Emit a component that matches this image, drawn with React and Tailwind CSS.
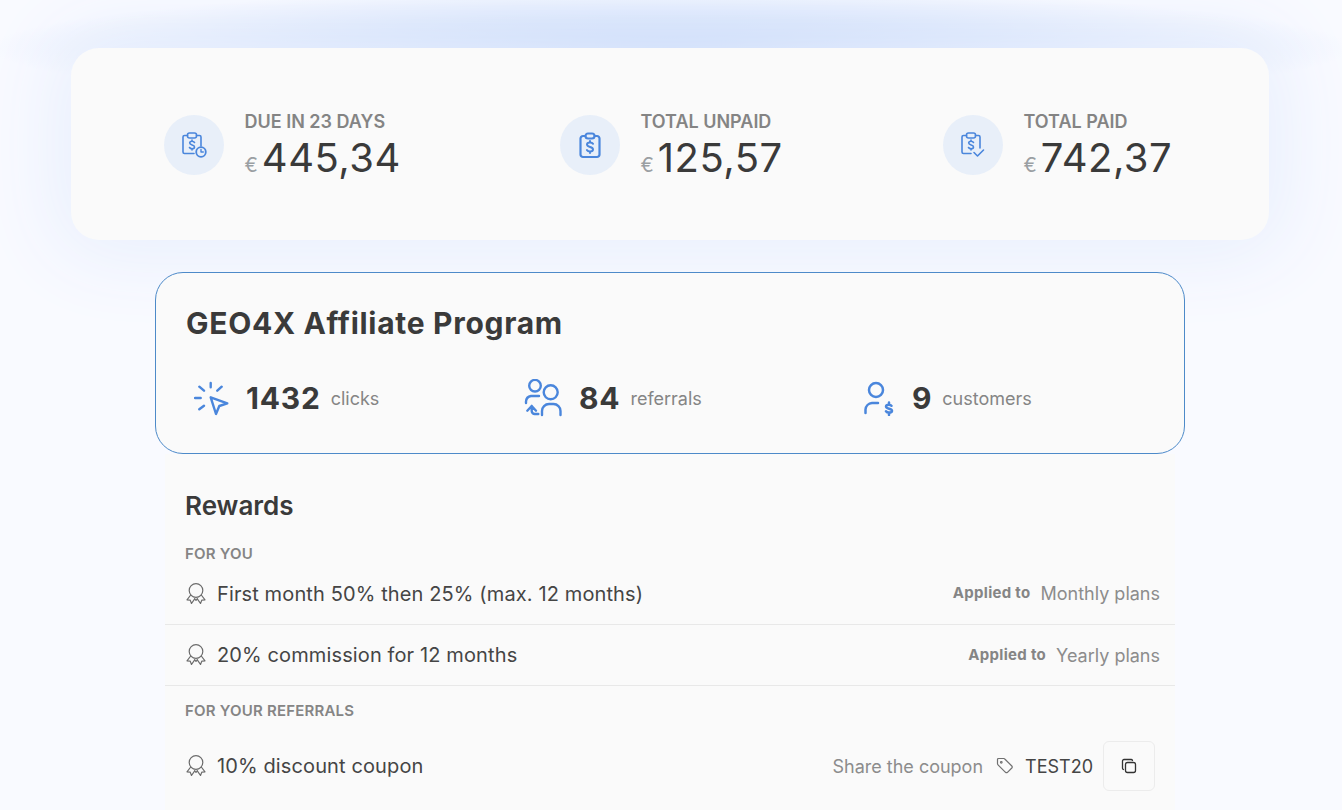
const BLUE = "#4a86dc";

function ClipboardBase({ children }) {
  return (
    <svg width="28" height="28" viewBox="0 0 28 28" fill="none" stroke={BLUE} strokeWidth="1.600" strokeLinecap="round" strokeLinejoin="round">
      {children}
    </svg>
  );
}

// dollar sign with short stubs, shared by the two thin clipboards
const THIN_DOLLAR = "M14.500 11.500c-.5-.8-1.400-1.200-2.500-1.200-1.400 0-2.300.8-2.300 1.800 0 2.500 4.800 1.300 4.800 3.800 0 1-1 1.800-2.500 1.800-1.100 0-2-.4-2.500-1.200M12 9v1.300M12 17.700V19";

function ClipboardClock() {
  return (
    <ClipboardBase>
      <path d="M7.500 4.500H4.500A1.500 1.500 0 0 0 3 6v15a1.500 1.500 0 0 0 1.500 1.500H14" />
      <path d="M16.500 4.500h3A1.500 1.500 0 0 1 21 6v9" />
      <rect x="7.500" y="2" width="9" height="5" rx="2" />
      <path d={THIN_DOLLAR} />
      <circle cx="21" cy="21" r="4.800" strokeWidth="1.800" />
      <path d="M21 18.500V21h2.300" strokeWidth="1.400" />
    </ClipboardBase>
  );
}

function ClipboardDollar() {
  return (
    <ClipboardBase>
      <path d="M9 5H7a2.500 2.500 0 0 0-2.500 2.500v16A2.500 2.500 0 0 0 7 26h14a2.500 2.500 0 0 0 2.500-2.500v-16A2.500 2.500 0 0 0 21 5h-2" strokeWidth="2.200" />
      <rect x="9.500" y="2.500" width="9" height="5" rx="2.500" strokeWidth="2.200" />
      <path d="M17 12.800c-.5-.9-1.500-1.300-3-1.300-1.700 0-3 .8-3 2.100 0 3 6 1.700 6 4.600 0 1.300-1.300 2.200-3 2.200-1.500 0-2.600-.5-3.100-1.400M14 10v1.500M14 20.400V22" strokeWidth="2" />
    </ClipboardBase>
  );
}

function ClipboardCheck() {
  return (
    <ClipboardBase>
      <path d="M7.500 4.500H4.500A1.500 1.500 0 0 0 3 6v15a1.500 1.500 0 0 0 1.500 1.500H12" />
      <path d="M16.500 4.500h3A1.500 1.500 0 0 1 21 6v11" />
      <rect x="7.500" y="2" width="9" height="5" rx="2" />
      <path d={THIN_DOLLAR} />
      <path d="M15 21.500l3.500 3.500 6-6" />
    </ClipboardBase>
  );
}

function ClickIcon() {
  return (
    <svg width="36" height="36" viewBox="0 0 36 36" fill="none" stroke={BLUE} strokeWidth="2.400" strokeLinecap="round" strokeLinejoin="round">
      <path d="M16.700 3v4.300M1 18h5.700M5.300 6.700l4.700 4M27.700 6.700l-4.400 4M5.300 29.300l4.700-3.600" />
      <path d="M16.700 17.300l16.600 6-8 2.700-3.300 8z" />
    </svg>
  );
}

function ReferralIcon() {
  return (
    <svg width="39" height="38" viewBox="0 0 39 38" fill="none" stroke={BLUE} strokeWidth="2.400" strokeLinecap="round" strokeLinejoin="round">
      <circle cx="11" cy="6.700" r="5.800" />
      <circle cx="26.700" cy="13.300" r="7" />
      <path d="M2 24v-1.500a6 6 0 0 1 5-5.500h8" />
      <path d="M18 36v-4a7 7 0 0 1 7-7h4.500a7 7 0 0 1 7 7v4" />
      <path d="M3.300 31.700L7.700 27l4.300 4.700M7.700 27v5a3 3 0 0 0 3 3h3.600" />
    </svg>
  );
}

function CustomerIcon() {
  return (
    <svg width="32" height="36" viewBox="0 0 32 36" fill="none" stroke={BLUE} strokeWidth="2.500" strokeLinecap="round" strokeLinejoin="round">
      <circle cx="12" cy="10" r="7" />
      <path d="M1.500 33v-3.500a7 7 0 0 1 6.500-6.500h6" />
      <path d="M27.500 25.800c-.5-.8-1.300-1.100-2.500-1.100-1.700 0-3 .7-3 1.900 0 2.700 6 1.500 6 4.100 0 1.200-1.300 1.900-3 1.900-1.300 0-2.400-.4-3-1.300M25 22.500v2.200M25 32.600V35" />
    </svg>
  );
}

function AwardIcon() {
  return (
    <svg width="22" height="22" viewBox="0 0 22 22" fill="none" stroke="#6b6b6b" strokeWidth="1.200" strokeLinecap="round" strokeLinejoin="round" className="shrink-0">
      <circle cx="11" cy="7.500" r="6.800" />
      <path d="M5.700 12L2 16.800l3.200.3 1.300 3.400 3.200-4.700" />
      <path d="M16.300 12l3.700 4.800-3.200.3-1.300 3.400-3.200-4.700" />
      <path d="M9.700 15.800l1.300 1.500 1.300-1.500" />
    </svg>
  );
}

function TagIcon() {
  return (
    <svg width="18" height="18" viewBox="0 0 18 18" fill="none" stroke="#707070" strokeWidth="1.200" strokeLinecap="round" strokeLinejoin="round">
      <path d="M1.500 2.500a1 1 0 0 1 1-1h5.300a1.500 1.500 0 0 1 1 .5l7 7a1.500 1.500 0 0 1 0 2l-4.300 4.300a1.500 1.500 0 0 1-2 0l-7.500-7.500a1.500 1.500 0 0 1-.5-1z" />
      <circle cx="5.300" cy="5.300" r=".8" />
    </svg>
  );
}

function CopyIcon() {
  return (
    <svg width="16" height="16" viewBox="0 0 16 16" fill="none" stroke="#333" strokeWidth="1.300" strokeLinecap="round" strokeLinejoin="round">
      <rect x="4.500" y="4.500" width="10" height="10" rx="2" />
      <path d="M11.500 2.500a1.500 1.500 0 0 0-1.500-1H3a1.500 1.500 0 0 0-1.500 1.500v7a1.500 1.500 0 0 0 1 1.500" />
    </svg>
  );
}

function Stat({ icon, label, value }) {
  return (
    <div className="flex items-center gap-[20.500px]">
      <div className="w-[60px] h-[60px] rounded-full bg-[#e8eff9] flex items-center justify-center shrink-0">{icon}</div>
      <div className="pt-[2px]">
        <div className="text-[18px] leading-[22px] font-semibold text-[#848484] tracking-[0px]">{label}</div>
        <div className="flex items-baseline mt-[1px] h-[48px] text-[#3a3a3a]">
          <span className="text-[20px] text-[#9a9fa3] mr-[4px]">€</span>
          <span className="text-[40px] leading-[48px] tracking-[0.5px]">{value}</span>
        </div>
      </div>
    </div>
  );
}

function Metric({ icon, value, label, className = "" }) {
  return (
    <div className={`flex items-center gap-[16px] ${className}`}>
      {icon}
      <div className="flex items-center gap-[10px]">
        <span className="text-[30px] font-bold text-[#3a3a3a] leading-none tracking-[0.8px]">{value}</span>
        <span className="text-[18px] text-[#858585]">{label}</span>
      </div>
    </div>
  );
}

function Row({ text, right, className = "" }) {
  return (
    <div className={`flex items-center justify-between pl-[20px] pr-[15px] ${className}`}>
      <div className="flex items-center gap-[10px] text-[20px] tracking-[0.12px] text-[#454545]">
        <AwardIcon />
        <span>{text}</span>
      </div>
      {right}
    </div>
  );
}

function Applied({ plan }) {
  return (
    <div className="flex items-center gap-[10px]">
      <span className="text-[15px] tracking-[0.3px] font-bold text-[#858585]">Applied to</span>
      <span className="text-[18px] text-[#8c8c8c]">{plan}</span>
    </div>
  );
}

export default function App() {
  return (
    <div className="h-[810px] overflow-hidden bg-[#f9faff] bg-[radial-gradient(ellipse_680px_60px_at_50%_48px,#b4ccf6_0%,#d3e1fb_50%,transparent_100%)] font-['Inter',sans-serif]">
      <div className="w-[1340px] pt-[48px]">
        {/* SUMMARY */}
        <div className="mx-[71px] h-[192px] pt-[2px] rounded-[28px] bg-[#fafafa] shadow-[0_0_80px_16px_#e8effd] grid grid-cols-[396px_383px_1fr] items-center pl-[93px]">
          <Stat icon={<ClipboardClock />} label="DUE IN 23 DAYS" value="445,34" />
          <Stat icon={<ClipboardDollar />} label="TOTAL UNPAID" value="125,57" />
          <Stat icon={<ClipboardCheck />} label="TOTAL PAID" value="742,37" />
        </div>

        {/* PROGRAM */}
        <div className="mx-[155px] mt-[32px] h-[182px] rounded-[28px] border border-[#4d8ac9] bg-[#fafafa] pl-[30px] pt-[30px]">
          <h1 className="text-[30px] leading-[40px] font-bold text-[#3a3a3a] tracking-[0.7px]">GEO4X Affiliate Program</h1>
          <div className="grid grid-cols-[338px_339px_1fr] mt-[35px] h-[40px] items-center">
            <Metric icon={<ClickIcon />} value="1432" label="clicks" className="pl-[8px]" />
            <Metric icon={<ReferralIcon />} value="84" label="referrals" />
            <Metric icon={<CustomerIcon />} value="9" label="customers" className="pl-[1px]" />
          </div>
        </div>

        {/* REWARDS */}
        <div className="mx-[165px] bg-[#fafafa] pt-[34px] h-[360px]">
          <h2 className="pl-[20px] text-[26px] leading-[36px] font-semibold text-[#3a3a3a]">Rewards</h2>
          <div className="pl-[20px] mt-[21px] text-[15px] tracking-[0.2px] leading-[18px] font-semibold text-[#858585]">FOR YOU</div>
          <Row className="h-[62px] border-b border-[#e8e8e8]" text="First month 50% then 25% (max. 12 months)" right={<Applied plan="Monthly plans" />} />
          <Row className="h-[61px] border-b border-[#e8e8e8]" text="20% commission for 12 months" right={<Applied plan="Yearly plans" />} />
          <div className="pl-[20px] mt-[16px] text-[15px] tracking-[0.2px] leading-[18px] font-semibold text-[#858585]">FOR YOUR REFERRALS</div>
          <Row
            className="mt-[21px] h-[50px] pr-[20px]"
            text="10% discount coupon"
            right={
              <div className="flex items-center">
                <span className="text-[18px] text-[#8c8c8c] mr-[13px]">Share the coupon</span>
                <TagIcon />
                <span className="text-[18px] text-[#454545] ml-[11px] mr-[10px]">TEST20</span>
                <button className="w-[52px] h-[50px] rounded-[6px] border border-[#ececec] flex items-center justify-center">
                  <CopyIcon />
                </button>
              </div>
            }
          />
        </div>
      </div>
    </div>
  );
}
